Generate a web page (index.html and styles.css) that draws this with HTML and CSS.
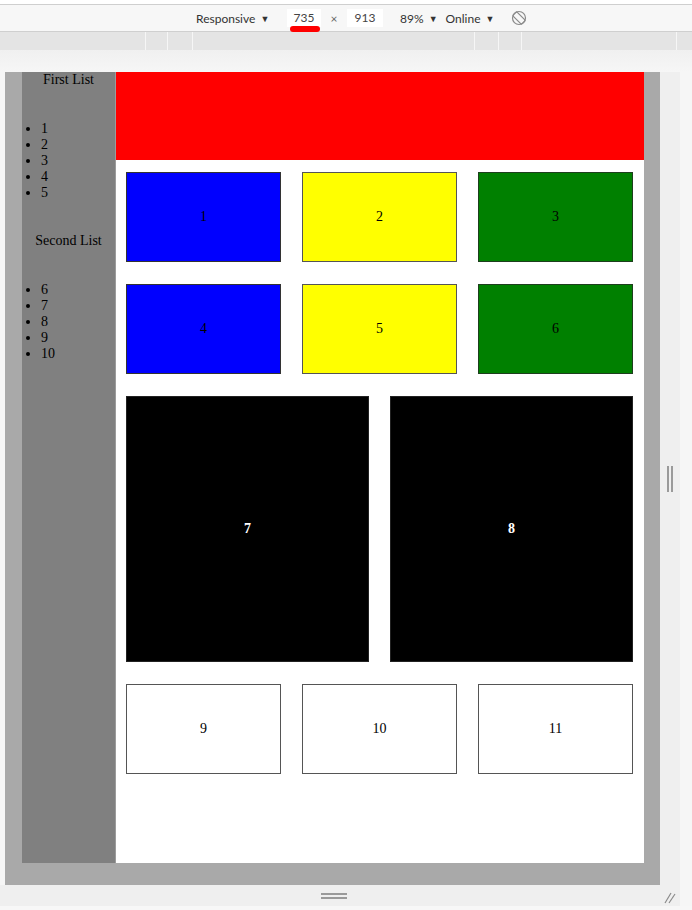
FILE: index.html
```html
<!DOCTYPE html>
<html lang="en">
<head>
  <meta charset="UTF-8" />
  <meta name="viewport" content="width=device-width, initial-scale=1.0" />
  <title>Responsive Layout</title>
  <link rel="stylesheet" href="styles.css">
</head>
<body>
  <div class="top-line"></div>

  <div class="toolbar">
    <span class="device">Responsive <span class="caret">&#9660;</span></span>
    <span class="size-input size-width">735</span>
    <span class="times">&times;</span>
    <span class="size-input size-height">913</span>
    <span class="zoom">89% <span class="caret">&#9660;</span></span>
    <span class="network">Online <span class="caret">&#9660;</span></span>
    <svg class="rotate" width="16" height="16" viewBox="0 0 16 16">
      <circle cx="8" cy="8" r="6.5" fill="none" stroke="#8a8a8a" stroke-width="1.2"/>
      <rect x="5.2" y="1.8" width="5.6" height="12.4" rx="1" fill="none" stroke="#8a8a8a" stroke-width="1.2" transform="rotate(-45 8 8)"/>
    </svg>
    <span class="marker"></span>
  </div>

  <div class="ruler">
    <div class="seg seg-1"></div>
    <div class="seg seg-2"></div>
    <div class="seg seg-3"></div>
    <div class="seg seg-4"></div>
    <div class="seg seg-5"></div>
    <div class="seg seg-6"></div>
    <div class="seg seg-7"></div>
    <div class="seg seg-8"></div>
  </div>

  <div class="stage">
    <div class="stage-row">
      <div class="viewport">
        <aside class="sidebar">
          <p class="list-title">First List</p>
          <ul>
            <li>1</li>
            <li>2</li>
            <li>3</li>
            <li>4</li>
            <li>5</li>
          </ul>
          <p class="list-title">Second List</p>
          <ul>
            <li>6</li>
            <li>7</li>
            <li>8</li>
            <li>9</li>
            <li>10</li>
          </ul>
        </aside>

        <main class="content">
          <div class="banner"></div>
          <div class="boxes">
            <div class="row row-three">
              <div class="box blue">1</div>
              <div class="box yellow">2</div>
              <div class="box green">3</div>
            </div>
            <div class="row row-three">
              <div class="box blue">4</div>
              <div class="box yellow">5</div>
              <div class="box green">6</div>
            </div>
            <div class="row row-two">
              <div class="box black">7</div>
              <div class="box black">8</div>
            </div>
            <div class="row row-three">
              <div class="box white">9</div>
              <div class="box white">10</div>
              <div class="box white">11</div>
            </div>
          </div>
        </main>
      </div>

      <div class="side-handle">
        <span class="grip-v"></span>
      </div>
    </div>

    <div class="bottom-row">
      <div class="bottom-handle">
        <span class="grip-h"></span>
        <svg class="corner" width="14" height="14" viewBox="0 0 14 14">
          <line x1="2" y1="13" x2="8" y2="3" stroke="#8a8a8a" stroke-width="1.2"/>
          <line x1="6" y1="13" x2="12" y2="4" stroke="#8a8a8a" stroke-width="1.2"/>
        </svg>
      </div>
    </div>
  </div>
</body>
</html>
```

FILE: styles.css
```css
body {
  margin: 0;
  background-color: #f7f7f7;
  font-family: Lato, "Open Sans", sans-serif;
  overflow: hidden;
}

/* devtools chrome */
.top-line {
  height: 4px;
  background-color: #ffffff;
  border-bottom: 1px solid #cfcfcf;
}
.toolbar {
  position: relative;
  height: 26px;
  display: flex;
  align-items: center;
  padding-left: 196px;
  background-color: #f7f7f7;
  border-bottom: 1px solid #cfcfcf;
  font-size: 12px;
  color: #333;
  white-space: nowrap;
}
.caret {
  font-size: 9px;
  margin-left: 2px;
  position: relative;
  top: -1px;
}
.device {
  width: 91px;
}
.size-input {
  height: 18px;
  line-height: 18px;
  background-color: #fff;
  text-align: center;
  color: #444;
}
.size-width {
  width: 34px;
}
.times {
  width: 26px;
  text-align: center;
  color: #666;
}
.size-height {
  width: 36px;
}
.zoom {
  margin-left: 17px;
}
.network {
  margin-left: 8px;
}
.rotate {
  margin-left: 17px;
}
.marker {
  position: absolute;
  left: 290px;
  top: 21px;
  width: 30px;
  height: 6px;
  border-radius: 3px;
  background-color: #ff0000;
}

.ruler {
  display: flex;
  height: 18px;
  background-color: #e4e4e4;
}
.seg {
  border-right: 1px solid #f6f6f6;
}
.seg-1 { width: 145px; }
.seg-2 { width: 21px; }
.seg-3 { width: 24px; }
.seg-4 { width: 281px; }
.seg-5 { width: 23px; }
.seg-6 { width: 22px; }
.seg-7 { width: 154px; }
.seg-8 { flex: 1; border-right: none; }

.stage {
  background: linear-gradient(#f0f0f0, #f6f6f6 22px);
}
.stage-row {
  display: flex;
  padding-top: 22px;
}
.viewport {
  margin-left: 5px;
  width: 655px;
  height: 813px;
  box-sizing: border-box;
  display: flex;
  background-color: #a9a9a9;
  padding: 0 16px 22px 17px;
}
.side-handle {
  width: 20px;
  display: flex;
  align-items: center;
  justify-content: center;
  background-color: #efefef;
}
.grip-v {
  width: 2px;
  height: 26px;
  border-left: 2px solid #9a9a9a;
  border-right: 2px solid #9a9a9a;
}
.bottom-row {
  display: flex;
}
.bottom-handle {
  position: relative;
  width: 680px;
  height: 21px;
  box-sizing: border-box;
  display: flex;
  align-items: center;
  padding-left: 321px;
  background-color: #efefef;
}
.grip-h {
  width: 26px;
  height: 2px;
  border-top: 2px solid #9a9a9a;
  border-bottom: 2px solid #9a9a9a;
}
.corner {
  position: absolute;
  right: 3px;
  top: 5px;
}

/* page inside the device */
.sidebar {
  width: 93px;
  background-color: #808080;
  border-right: 1px solid #9c9c9c;
  font-family: "Liberation Serif", "Times New Roman", serif;
  font-size: 14px;
  line-height: 16px;
  color: #000;
}
.list-title {
  margin: 0 0 33px 0;
  text-align: center;
}
.sidebar ul {
  margin: 0 0 32px 0;
  padding-left: 19px;
}

.content {
  flex: 1;
  background-color: #fff;
  font-family: "Liberation Serif", "Times New Roman", serif;
  font-size: 14px;
}
.banner {
  height: 88px;
  background-color: #ff0000;
}
.boxes {
  display: flex;
  flex-direction: column;
  gap: 22px;
  padding: 12px 11px 0 10px;
}
.row {
  display: grid;
  column-gap: 21px;
}
.row-three {
  grid-template-columns: 1fr 1fr 1fr;
  height: 90px;
}
.row-two {
  grid-template-columns: 1fr 1fr;
  height: 266px;
}
.box {
  display: flex;
  align-items: center;
  justify-content: center;
  border: 1px solid #333;
}
.blue { background-color: #0000ff; }
.yellow { background-color: #ffff00; border-color: #555; }
.green { background-color: #008000; border-color: #1e3e1e; }
.black {
  background-color: #000;
  color: #fff;
  font-weight: bold;
  border-color: #222;
}
.white {
  background-color: #fff;
  border-color: #555;
}
```
